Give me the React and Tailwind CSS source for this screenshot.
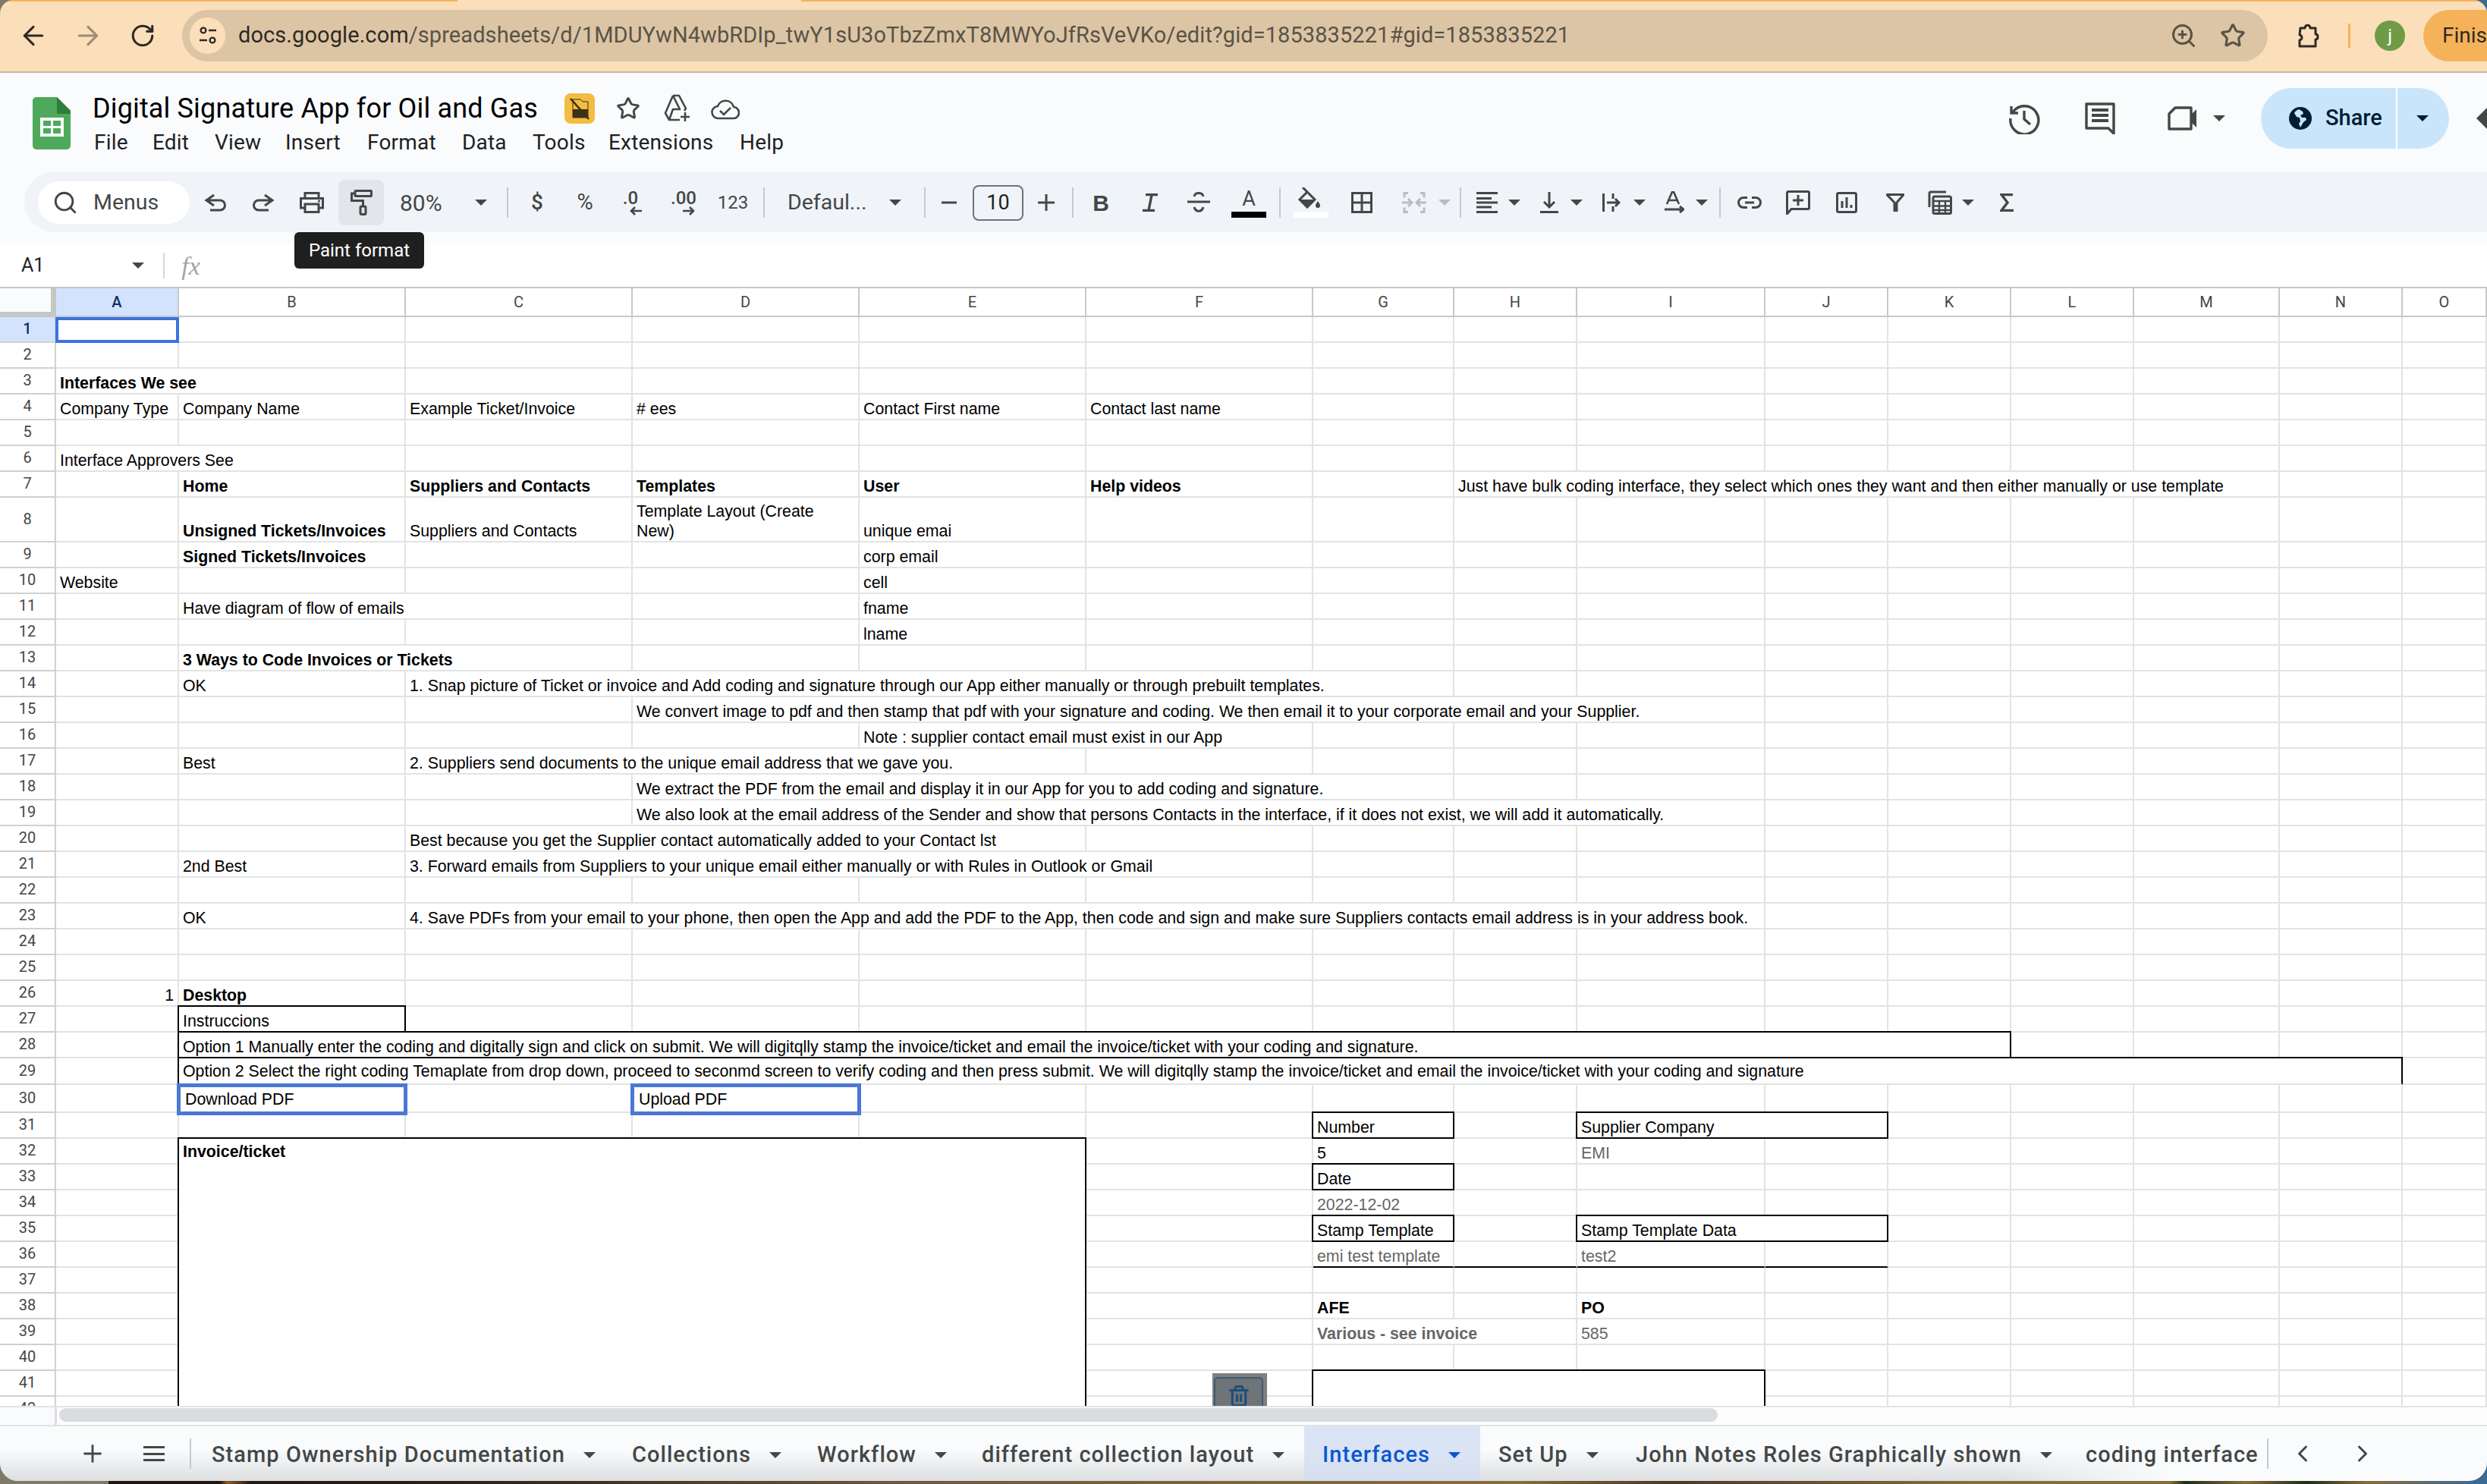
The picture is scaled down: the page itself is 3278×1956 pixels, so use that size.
import { ArrowLeft, ArrowRight, RotateCw, ZoomIn, Star, ChevronLeft, ChevronRight, Trash2, Search, Plus } from 'lucide-react'

const uiFont = "font-['Roboto',sans-serif]"
const cellFont = "font-['Liberation_Sans',Arial,sans-serif]"

const columns = ['A', 'B', 'C', 'D', 'E', 'F', 'G', 'H', 'I', 'J', 'K', 'L', 'M', 'N', 'O']
const rowCount = 42

const sheet = {
  3: [{ c: 'A', t: 'Interfaces We see', bold: true, span: 2 }],
  4: [
    { c: 'A', t: 'Company Type' },
    { c: 'B', t: 'Company Name' },
    { c: 'C', t: 'Example Ticket/Invoice' },
    { c: 'D', t: '# ees' },
    { c: 'E', t: 'Contact First name' },
    { c: 'F', t: 'Contact last name' },
  ],
  6: [{ c: 'A', t: 'Interface Approvers See', span: 2 }],
  7: [
    { c: 'B', t: 'Home', bold: true },
    { c: 'C', t: 'Suppliers and Contacts', bold: true },
    { c: 'D', t: 'Templates', bold: true },
    { c: 'E', t: 'User', bold: true },
    { c: 'F', t: 'Help videos', bold: true },
    { c: 'H', t: 'Just have bulk coding interface, they select which ones they want and then either manually or use template', span: 6 },
  ],
  8: [
    { c: 'B', t: 'Unsigned Tickets/Invoices', bold: true },
    { c: 'C', t: 'Suppliers and Contacts' },
    { c: 'D', t: 'Template Layout (Create\nNew)' },
    { c: 'E', t: 'unique emai' },
  ],
  9: [
    { c: 'B', t: 'Signed Tickets/Invoices', bold: true },
    { c: 'E', t: 'corp email' },
  ],
  10: [
    { c: 'A', t: 'Website' },
    { c: 'E', t: 'cell' },
  ],
  11: [
    { c: 'B', t: 'Have diagram of flow of emails', span: 2 },
    { c: 'E', t: 'fname' },
  ],
  12: [{ c: 'E', t: 'lname' }],
  13: [{ c: 'B', t: '3 Ways to Code Invoices or Tickets', bold: true, span: 2 }],
  14: [
    { c: 'B', t: 'OK' },
    { c: 'C', t: '1. Snap picture of Ticket or invoice and Add coding and signature through our App either manually or through prebuilt templates.', span: 5 },
  ],
  15: [{ c: 'D', t: 'We convert image to pdf and then stamp that pdf with your signature and coding. We then email it to your corporate email and your Supplier.', span: 6 }],
  16: [{ c: 'E', t: 'Note : supplier contact email must exist in our App', span: 2 }],
  17: [
    { c: 'B', t: 'Best' },
    { c: 'C', t: '2. Suppliers send documents to the unique email address that we gave you.', span: 3 },
  ],
  18: [{ c: 'D', t: 'We extract the PDF from the email and display it in our App for you to add coding and signature.', span: 4 }],
  19: [{ c: 'D', t: 'We also look at the email address of the Sender and show that persons Contacts in the interface, if it does not exist, we will add it automatically.', span: 6 }],
  20: [{ c: 'C', t: 'Best because you get the Supplier contact automatically added to your Contact lst', span: 3 }],
  21: [
    { c: 'B', t: '2nd Best' },
    { c: 'C', t: '3. Forward emails from Suppliers to your unique email either manually or with Rules in Outlook or Gmail', span: 4 },
  ],
  23: [
    { c: 'B', t: 'OK' },
    { c: 'C', t: '4. Save PDFs from your email to your phone, then open the App and add the PDF to the App, then code and sign and make sure Suppliers contacts email address is in your address book.', span: 7 },
  ],
  26: [
    { c: 'A', t: '1', right: true },
    { c: 'B', t: 'Desktop', bold: true },
  ],
  27: [{ c: 'B', t: 'Instruccions', look: 'box' }],
  28: [{ c: 'B', t: 'Option 1 Manually enter the coding and digitally sign and click on submit. We will digitqlly stamp the invoice/ticket and email the invoice/ticket with your coding and signature.', span: 10, look: 'box' }],
  29: [{ c: 'B', t: 'Option 2 Select the right coding Temaplate from drop down, proceed to seconmd screen to verify coding and then press submit. We will digitqlly stamp the invoice/ticket and email the invoice/ticket with your coding and signature', span: 13, look: 'open' }],
  30: [
    { c: 'B', t: 'Download PDF', look: 'button' },
    { c: 'D', t: 'Upload PDF', look: 'button' },
  ],
  31: [
    { c: 'G', t: 'Number', look: 'box' },
    { c: 'I', t: 'Supplier Company', span: 2, look: 'box' },
  ],
  32: [
    { c: 'B', t: 'Invoice/ticket', bold: true, span: 4, rows: 11, look: 'boxTop' },
    { c: 'G', t: '5' },
    { c: 'I', t: 'EMI', grey: true },
  ],
  33: [{ c: 'G', t: 'Date', look: 'box' }],
  34: [{ c: 'G', t: '2022-12-02', grey: true }],
  35: [
    { c: 'G', t: 'Stamp Template', look: 'box' },
    { c: 'I', t: 'Stamp Template Data', span: 2, look: 'box' },
  ],
  36: [
    { c: 'G', t: 'emi test template', grey: true, look: 'under' },
    { c: 'H', look: 'under' },
    { c: 'I', t: 'test2', grey: true, look: 'under' },
    { c: 'J', look: 'under' },
  ],
  38: [
    { c: 'G', t: 'AFE', bold: true },
    { c: 'I', t: 'PO', bold: true },
  ],
  39: [
    { c: 'G', t: 'Various - see invoice', bold: true, grey: true, span: 2 },
    { c: 'I', t: '585', grey: true },
  ],
  41: [{ c: 'G', span: 3, rows: 2, look: 'box' }],
}

const looks = {
  plain: 'border-r-2 border-b-2 border-[#e2e3e3] pl-[5px] items-end',
  under: 'border-r-2 border-b-2 border-r-[#e2e3e3] border-b-black pl-[5px] items-end',
  box: '-mt-[2px] -ml-[2px] relative z-10 border-2 border-black pl-[5px] items-end',
  boxTop: '-mt-[2px] -ml-[2px] relative z-10 border-2 border-black pl-[5px] pt-[4px] items-start',
  open: '-mt-[2px] -ml-[2px] relative z-10 border-2 border-black border-b-[#e2e3e3] pl-[5px] pb-[3px] items-end',
  button: '-mt-[2px] -ml-[3px] -mr-[2px] -mb-[3px] relative z-20 border-[5px] border-[#4a78d4] pl-[6px] items-center',
}

function buildCells() {
  const cells = []
  const taken = new Set()
  for (let r = 1; r <= rowCount; r++) {
    const filled = sheet[r] || []
    columns.forEach((letter, i) => {
      if (taken.has(`${r}-${i}`)) return
      const cell = filled.find((x) => x.c === letter) || { c: letter }
      const span = cell.span || 1
      const rows = cell.rows || 1
      for (let y = 0; y < rows; y++) {
        for (let x = 0; x < span; x++) taken.add(`${r + y}-${i + x}`)
      }
      cells.push({ ...cell, r, i, span, rows })
    })
  }
  return cells
}

function Caret({ className = 'text-[#444746]' }) {
  return (
    <svg width="16" height="8" viewBox="0 0 16 8" className={`shrink-0 ${className}`}>
      <path d="M0 0h16L8 8z" fill="currentColor" />
    </svg>
  )
}

function Slot({ className = '', children }) {
  return <div className={`flex h-full shrink-0 items-center justify-center ${className}`}>{children}</div>
}

function Divider() {
  return <div className="h-[40px] w-[2px] shrink-0 bg-[#c7c9cc]" />
}

function Icon({ w = 36, h = 36, children, className = 'text-[#444746]' }) {
  return (
    <svg width={w} height={h} viewBox={`0 0 ${w} ${h}`} fill="none" stroke="currentColor" strokeWidth="3" className={`shrink-0 ${className}`}>
      {children}
    </svg>
  )
}

function BrowserBar() {
  return (
    <div className="h-[96px] shrink-0 border-b-2 border-[#c9b499] bg-[#fbdfba]">
      <div className="flex h-[2px]">
        <div className="w-[603px] bg-[#f5b25a]" />
        <div className="w-[453px]" />
        <div className="flex-1 bg-[#f5b25a]" />
      </div>
      <div className="flex h-[92px] items-center pb-[2px]">
        <Slot className="w-[88px]">
          <ArrowLeft size={40} className="text-[#2f2a24]" strokeWidth={1.9} />
        </Slot>
        <Slot className="w-[56px]">
          <ArrowRight size={40} className="text-[#9b8c78]" strokeWidth={1.9} />
        </Slot>
        <Slot className="w-[88px]">
          <RotateCw size={34} className="text-[#2f2a24]" strokeWidth={2.2} />
        </Slot>
        <div className="ml-[8px] flex h-[68px] w-[2749px] shrink-0 items-center rounded-full bg-[#dcc5a5] pl-[10px] pr-[29px]">
          <div className="flex h-[48px] w-[47px] items-center justify-center rounded-full bg-[#fbdfba]">
            <svg width="26" height="26" viewBox="0 0 26 26" fill="none" stroke="#2f2a24" strokeWidth="2.4">
              <circle cx="7" cy="6" r="3.4" />
              <path d="M14 6h10M2 19h10" />
              <circle cx="19" cy="19" r="3.4" />
            </svg>
          </div>
          <div className={`${uiFont} ml-[17px] whitespace-nowrap text-[29px] tracking-[0.08px] text-[#5a5348]`}>
            <span className="text-[#2f2a24]">docs.google.com</span>/spreadsheets/d/1MDUYwN4wbRDIp_twY1sU3oTbzZmxT8MWYoJfRsVeVKo/edit?gid=1853835221#gid=1853835221
          </div>
          <ZoomIn size={36} className="ml-auto text-[#5a5348]" strokeWidth={2} />
          <Star size={34} className="ml-[30px] text-[#5a5348]" strokeWidth={2.2} />
        </div>
        <Slot className="w-[106px]">
          <svg width="32" height="32" viewBox="0 0 32 32" fill="none" stroke="#2f2a24" strokeWidth="3">
            <path d="M6 6h6c0-5 7-5 7 0h7v8c4 0 4 7 0 7v9H5v-8c4-1 4-6 0-7z" strokeLinejoin="round" />
          </svg>
        </Slot>
        <div className="h-[32px] w-[3px] shrink-0 bg-[#f5b25a]" />
        <div className={`${uiFont} ml-[32px] flex h-[40px] w-[40px] shrink-0 items-center justify-center rounded-full bg-[#6f9b47] text-[24px] text-white`}>j</div>
        <div className={`${uiFont} ml-[24px] flex h-[68px] w-[120px] shrink-0 items-center rounded-l-full bg-[#f5b25a] pl-[25px] text-[28px] text-[#2f2a24]`}>Finish</div>
      </div>
    </div>
  )
}

function SheetsLogo() {
  return (
    <svg width="50" height="69" viewBox="0 0 50 69" className="shrink-0">
      <path d="M5 0h27l18 18v46a5 5 0 0 1-5 5H5a5 5 0 0 1-5-5V5a5 5 0 0 1 5-5z" fill="#4ea95c" />
      <path d="M32 0l18 18v4H32z" fill="#2f7d3b" />
      <rect x="10" y="27" width="31" height="25" fill="#fff" />
      <path d="M14 31h10v7H14zM27 31h10v7H27zM14 41h10v7H14zM27 41h10v7H27z" fill="#4ea95c" />
    </svg>
  )
}

const menus = [
  ['File', 'w-[77px]'],
  ['Edit', 'w-[82px]'],
  ['View', 'w-[93px]'],
  ['Insert', 'w-[108px]'],
  ['Format', 'w-[125px]'],
  ['Data', 'w-[93px]'],
  ['Tools', 'w-[100px]'],
  ['Extensions', 'w-[173px]'],
  ['Help', 'w-[70px]'],
]

function DocHeader() {
  return (
    <div className="flex h-[130px] shrink-0 justify-between">
      <div className="flex">
        <div className="ml-[43px] mt-[32px]">
          <SheetsLogo />
        </div>
        <div className="ml-[29px] mt-[25px]">
          <div className="flex h-[44px] items-center">
            <div className={`${uiFont} w-[622px] whitespace-nowrap text-[36px] leading-[44px] tracking-[0.15px] text-black`}>Digital Signature App for Oil and Gas</div>
            <div className="flex h-[40px] w-[40px] items-center justify-center rounded-[8px] bg-[#f2bd42]">
              <svg width="28" height="32" viewBox="0 0 28 32" fill="#3d3115" stroke="#3d3115">
                <path d="M5 4h10l3 3h7v21H5z" strokeWidth="1" fill="none" />
                <path d="M5 17h20v11H5z" strokeWidth="0" />
                <path d="M2 3l24 27" strokeWidth="2.6" />
              </svg>
            </div>
            <Star size={32} className="ml-[28px] text-[#444746]" strokeWidth={2.2} />
            <svg width="36" height="38" viewBox="0 0 36 38" fill="none" stroke="#444746" strokeWidth="2.6" className="ml-[30px]">
              <path d="M13 2h8l9 17-2 3M13 2L3 25l5 9h14M13 2l9 18H13l-5 14" strokeLinejoin="round" />
              <path d="M29 24v12M23 30h12" />
            </svg>
            <svg width="38" height="34" viewBox="0 0 38 34" fill="none" stroke="#444746" strokeWidth="2.6" className="ml-[27px]">
              <path d="M10 30a8 8 0 0 1-1-16 11 11 0 0 1 21 1 7.5 7.5 0 0 1-1 15z" strokeLinejoin="round" />
              <path d="M12 20l5 5 9-9" />
            </svg>
          </div>
          <div className={`${uiFont} ml-[2px] mt-[5px] flex h-[36px] items-center text-[28px] tracking-[0.2px] text-[#1f1f1f]`}>
            {menus.map(([name, width]) => (
              <div key={name} className={width}>
                {name}
              </div>
            ))}
          </div>
        </div>
      </div>
      <div className="mt-[20px] flex h-[80px] w-[660px] shrink-0 items-center self-start">
        <Slot className="w-[100px]">
          <svg width="42" height="42" viewBox="0 0 42 42" fill="none" stroke="#444746" strokeWidth="3.4">
            <path d="M4 5v9h9" />
            <path d="M6 13A18.500 18.500 0 1 1 3 21" />
            <path d="M21 11v11l8 7" />
          </svg>
        </Slot>
        <Slot className="w-[100px]">
          <svg width="40" height="42" viewBox="0 0 40 42" fill="none" stroke="#444746" strokeWidth="3.4">
            <path d="M38 41l-7-7H2V2h36z" strokeLinejoin="round" />
            <path d="M9 10h22M9 17h22M9 24h22" strokeWidth="4" />
          </svg>
        </Slot>
        <Slot className="w-[118px] justify-start pl-[39px]">
          <svg width="40" height="32" viewBox="0 0 40 32" fill="none" stroke="#444746" strokeWidth="3.4">
            <path d="M10 2h21v28H2V10z" strokeLinejoin="round" />
            <path d="M38 4v24l-7-7v-10z" fill="#444746" stroke="none" />
          </svg>
          <div className="ml-[20px]">
            <Caret />
          </div>
        </Slot>
        <div className={`${uiFont} ml-[44px] flex h-[80px] w-[248px] shrink-0 items-center overflow-hidden rounded-full bg-[#c9e5fc] text-[#001d35]`}>
          <div className="flex h-full w-[180px] items-center border-r-2 border-white pl-[37px]">
            <svg width="30" height="30" viewBox="0 0 30 30" className="shrink-0">
              <circle cx="15" cy="15" r="15" fill="#001d35" />
              <path d="M13 3c-3 1-5 3-6 5l3 5 4 1 1 5-2 3 2 5 4-7 4-3-1-3h-5l-2-3 4-2-1-3z" fill="#c9e5fc" />
            </svg>
            <span className="ml-[18px] text-[29px] font-medium">Share</span>
          </div>
          <div className="flex flex-1 justify-center pr-[2px]">
            <Caret className="text-[#001d35]" />
          </div>
        </div>
        <div className="flex w-[50px] justify-end">
          <svg width="14" height="28" viewBox="0 0 14 28">
            <path d="M14 0L0 14l14 14z" fill="#444746" />
          </svg>
        </div>
      </div>
    </div>
  )
}

function Toolbar() {
  return (
    <div className="h-[96px] shrink-0 pl-[32px]">
      <div className={`${uiFont} flex h-[80px] items-center rounded-l-[40px] bg-[#f0f4f9] pl-[18px] pt-[2px] text-[#444746]`}>
        <div className="flex h-[56px] w-[200px] shrink-0 items-center rounded-full bg-white pl-[19px]">
          <Search size={34} strokeWidth={2} className="text-[#444746]" />
          <span className="ml-[20px] text-[28.500px]">Menus</span>
        </div>
        <Slot className="w-[68px]">
          <Icon>
            <path d="M16 8L6 15l10 7M6 15h18a6.500 6.500 0 0 1 0 13H11" />
          </Icon>
        </Slot>
        <Slot className="w-[58px]">
          <Icon>
            <path d="M20 8l10 7-10 7M30 15H12a6.500 6.500 0 0 0 0 13h13" />
          </Icon>
        </Slot>
        <Slot className="w-[70px]">
          <Icon>
            <path d="M9 12V5.500h18V12M9 25H3.500V12.500h29V25H27" />
            <rect x="9" y="20" width="18" height="10.500" />
            <circle cx="27.500" cy="16" r="1.600" fill="currentColor" stroke="none" />
          </Icon>
        </Slot>
        <Slot className="h-[60px]! w-[60px] rounded-[8px] bg-[#e2e6ea]">
          <Icon>
            <rect x="10" y="2.500" width="21.500" height="7" rx="1" />
            <path d="M10 6H5.500v9.500h15V23" />
            <rect x="17" y="23" width="7" height="10.500" rx="1.500" />
          </Icon>
        </Slot>
        <Slot className="w-[106px] justify-start pl-[21px]">
          <span className="text-[30px]">80%</span>
        </Slot>
        <Slot className="w-[44px]">
          <Caret />
        </Slot>
        <div className="w-[12px] shrink-0" />
        <Divider />
        <Slot className="w-[76px] text-[28px] font-medium">$</Slot>
        <Slot className="w-[50px] text-[29px]">%</Slot>
        <Slot className="w-[70px]">
          <div className="flex flex-col items-center">
            <span className="text-[24px] leading-[22px] font-medium">.0</span>
            <svg width="16" height="12" viewBox="0 0 16 12" fill="none" stroke="currentColor" strokeWidth="2.6" className="ml-[14px]">
              <path d="M7 1L2 6l5 5M2 6h14" />
            </svg>
          </div>
        </Slot>
        <Slot className="w-[70px]">
          <div className="flex flex-col items-center">
            <span className="text-[24px] leading-[22px] font-medium">.00</span>
            <svg width="16" height="12" viewBox="0 0 16 12" fill="none" stroke="currentColor" strokeWidth="2.6" className="ml-[14px]">
              <path d="M9 1l5 5-5 5M14 6H0" />
            </svg>
          </div>
        </Slot>
        <Slot className="w-[60px] text-[24px]">123</Slot>
        <div className="w-[10px] shrink-0" />
        <Divider />
        <Slot className="w-[152px] justify-start pl-[30px]">
          <span className="text-[28.500px]">Defaul...</span>
        </Slot>
        <Slot className="w-[40px]">
          <Caret />
        </Slot>
        <div className="w-[18px] shrink-0" />
        <Divider />
        <Slot className="w-[62px]">
          <Icon w={20} h={4}>
            <path d="M0 2h20" />
          </Icon>
        </Slot>
        <div className="flex h-[47px] w-[67px] shrink-0 items-center justify-center rounded-[8px] border-2 border-[#6f7377] text-[27px] text-[#1f1f1f]">10</div>
        <Slot className="w-[60px]">
          <Icon w={22} h={22}>
            <path d="M11 0v22M0 11h22" />
          </Icon>
        </Slot>
        <div className="w-[4px] shrink-0" />
        <Divider />
        <Slot className="w-[72px] font-['Liberation_Sans',sans-serif] text-[30px] font-bold">B</Slot>
        <Slot className="w-[58px]">
          <Icon w={20} h={24}>
            <path d="M4 1.500h16M0 22.500h16M12 2L8 22" strokeWidth="3.400" />
          </Icon>
        </Slot>
        <Slot className="w-[70px]">
          <Icon w={32} h={30}>
            <path d="M1 14h30" />
            <path d="M10 7c1-6 11-6 12 0M10 21c2 7 10 7 12 0" />
          </Icon>
        </Slot>
        <Slot className="w-[62px]">
          <div className="flex w-[46px] flex-col items-center">
            <span className="text-[27px] leading-[30px]">A</span>
            <div className="mt-[2px] h-[8px] w-[46px] bg-black" />
          </div>
        </Slot>
        <div className="w-[9px] shrink-0" />
        <Divider />
        <Slot className="w-[80px]">
          <div className="flex h-[40px] w-[46px] flex-col justify-between">
            <svg width="46" height="28" viewBox="0 0 46 28" fill="none" stroke="currentColor" strokeWidth="3">
              <path d="M12 0l6 6L8 16l10 10 10-10-10-10" />
              <path d="M9 16h19l-10 10z" fill="currentColor" stroke="none" />
              <path d="M32 18c2 3 3 4 3 6a3 3 0 0 1-6 0c0-2 1-3 3-6z" fill="currentColor" stroke="none" />
            </svg>
            <div className="h-[8px] w-[46px] bg-white" />
          </div>
        </Slot>
        <Slot className="w-[54px]">
          <Icon w={28} h={28}>
            <path d="M1.500 1.500h25v25h-25zM14 1.500v25M1.500 14h25" />
          </Icon>
        </Slot>
        <Slot className="w-[102px] justify-start pl-[26px] text-[#b7b9bc]">
          <Icon w={32} h={28} className="text-[#b9bcc0]">
            <path d="M8 1.500H3v6M3 20.500v6h5M24 1.500h5v6M29 20.500v6h-5" />
            <path d="M0 14h12M8 9l5 5-5 5M32 14H20M24 9l-5 5 5 5" />
          </Icon>
          <div className="ml-[16px]">
            <Caret className="text-[#b9bcc0]" />
          </div>
        </Slot>
        <Divider />
        <Slot className="w-[94px] justify-start pl-[20px]">
          <Icon w={28} h={28}>
            <path d="M0 1.500h28M0 8.500h20M0 14h28M0 20h20M0 26.500h28" />
          </Icon>
          <div className="ml-[14px]">
            <Caret />
          </div>
        </Slot>
        <Slot className="w-[80px] justify-start pl-[10px]">
          <Icon w={24} h={28}>
            <path d="M12 0v20M5 13l7 7 7-7M0 26.500h24" />
          </Icon>
          <div className="ml-[16px]">
            <Caret />
          </div>
        </Slot>
        <Slot className="w-[80px] justify-start pl-[12px]">
          <Icon w={24} h={26}>
            <path d="M1.500 1v24M14 1v7M14 18v7M6 13h16M17 8l5 5-5 5" />
          </Icon>
          <div className="ml-[17px]">
            <Caret />
          </div>
        </Slot>
        <Slot className="w-[86px] justify-start pl-[14px]">
          <Icon w={26} h={30}>
            <path d="M3 17L10 1h2l7 16M5.500 12h11" strokeWidth="2.600" />
            <path d="M0 24h22M20 20l5 4-5 4" />
          </Icon>
          <div className="ml-[15px]">
            <Caret />
          </div>
        </Slot>
        <Divider />
        <Slot className="w-[76px]">
          <Icon w={32} h={16}>
            <path d="M13 1.500H8a6.500 6.500 0 0 0 0 13h5M19 1.500h5a6.500 6.500 0 0 1 0 13h-5M10 8h12" />
          </Icon>
        </Slot>
        <Slot className="w-[52px]">
          <Icon w={32} h={32}>
            <path d="M1.500 31V3a1.500 1.500 0 0 1 1.500-1.500h26A1.500 1.500 0 0 1 30.500 3v20a1.500 1.500 0 0 1-1.500 1.500H7z" />
            <path d="M16 6v14M9 13h14" />
          </Icon>
        </Slot>
        <Slot className="w-[76px]">
          <Icon w={28} h={28}>
            <rect x="1.500" y="1.500" width="25" height="25" rx="2" />
            <path d="M8 12v9M14 7v14M20 17v4" />
          </Icon>
        </Slot>
        <Slot className="w-[52px]">
          <Icon w={24} h={24}>
            <path d="M1 1.500h22L14 12v12h-3V12z" strokeLinejoin="round" strokeWidth="3" fill="none" />
          </Icon>
        </Slot>
        <Slot className="w-[96px] justify-start pl-[17px]">
          <Icon w={32} h={32}>
            <path d="M2 22V4a2 2 0 0 1 2-2h20" />
            <rect x="7" y="8" width="23.500" height="22.500" rx="2" />
            <path d="M7 14h23M7 20.500h23M7 26h23M15 14v16M23 14v16" strokeWidth="2.400" />
          </Icon>
          <div className="ml-[13px]">
            <Caret />
          </div>
        </Slot>
        <Slot className="w-[50px]">
          <Icon w={18} h={24}>
            <path d="M17 1.500H2l8 10.500-8 10.500h16" strokeWidth="3.400" />
          </Icon>
        </Slot>
      </div>
    </div>
  )
}

function FormulaBar() {
  return (
    <div className="relative flex h-[56px] shrink-0 items-center bg-white">
      <span className={`${uiFont} ml-[28px] text-[25px] text-[#1f1f1f]`}>A1</span>
      <div className="ml-[116px]">
        <Caret />
      </div>
      <div className="ml-[25px] h-[34px] w-[2px] bg-[#d5d7d9]" />
      <span className="ml-[22px] font-['Liberation_Serif',serif] text-[34px] italic text-[#a3a5a8]">fx</span>
      <div className={`${uiFont} absolute left-[388px] top-[-16px] z-30 flex h-[48px] w-[171px] items-center justify-center rounded-[6px] bg-[#1f1f1f] text-[24px] text-white`}>Paint format</div>
    </div>
  )
}

function Sheet() {
  const cells = buildCells()
  return (
    <div className="relative h-[1475px] shrink-0 overflow-hidden border-t-2 border-[#c4c7c5] bg-white">
      <div className="grid grid-cols-[74px_162px_repeat(5,299px)_186px_162px_248px_162px_162px_162px_192px_162px_111px] grid-rows-[38px_repeat(7,34px)_59px_repeat(20,34px)_35px_37px_repeat(12,34px)]">
        <div className="border-r-[7px] border-b-[7px] border-[#c4c7c5] bg-[#f9fbfd]" />
        {columns.map((c) => (
          <div
            key={c}
            className={`${uiFont} flex items-center justify-center border-r-2 border-b-2 border-[#c7c9c9] text-[20px] ${c === 'A' ? 'bg-[#d3e3fd] font-medium text-[#0b2f66]' : 'text-[#444746]'}`}
          >
            {c}
          </div>
        ))}
        {Array.from({ length: rowCount }, (_, i) => i + 1).map((n) => (
          <div
            key={n}
            style={{ gridColumn: 1, gridRow: n + 1 }}
            className={`${uiFont} flex items-center justify-center border-r-2 border-b-2 border-[#cfd1d1] pb-[2px] text-[20px] ${n === 1 ? 'bg-[#d3e3fd] font-medium text-[#0b2f66]' : 'text-[#444746]'}`}
          >
            {n}
          </div>
        ))}
        {cells.map((cell) => (
          <div
            key={`${cell.r}-${cell.c}`}
            style={{
              gridColumn: `${cell.i + 2} / span ${cell.span}`,
              gridRow: `${cell.r + 1} / span ${cell.rows}`,
            }}
            className={`${cellFont} flex min-w-0 whitespace-pre text-[21.33px] leading-[26px] ${looks[cell.look || 'plain']} ${cell.bold ? 'font-bold' : ''} ${cell.grey ? 'text-[#666666]' : 'text-black'} ${cell.right ? 'justify-end pr-[5px]' : ''}`}
          >
            {cell.t}
          </div>
        ))}
        <div style={{ gridColumn: 2, gridRow: 2 }} className="relative z-20 -ml-[1px] border-4 border-[#3b73de]" />
      </div>
      {/* trash button floating over the sheet */}
      <div className="absolute left-[1598px] top-[1430px] z-20 h-[60px] w-[72px] bg-[#7f7f7f] pl-[2px] pt-[5px]">
        <div className="flex h-[60px] w-[65px] justify-center rounded-[5px] border-2 border-[#3d5a75] bg-[#6f7478] pt-[8px]">
          <Trash2 size={30} className="text-[#1d4e79]" strokeWidth={2.4} />
        </div>
      </div>
    </div>
  )
}

function ScrollRow() {
  return (
    <div className="flex h-[27px] shrink-0 border-t-2 border-b-2 border-t-[#e2e3e3] border-b-[#e1e3e1] bg-[#fdfdfe]">
      <div className="h-full w-[75px] border-r-[3px] border-[#dadce0] bg-[#f9fbfd]" />
      <div className="ml-[3px] mt-[1px] h-[18px] w-[2186px] rounded-[9px] bg-[#dadce0]" />
    </div>
  )
}

const tabs = [
  { name: 'Stamp Ownership Documentation', width: 'w-[554px]' },
  { name: 'Collections', width: 'w-[244px]' },
  { name: 'Workflow', width: 'w-[217px]' },
  { name: 'different collection layout', width: 'w-[449px]' },
  { name: 'Interfaces', width: 'w-[232px]', active: true },
  { name: 'Set Up', width: 'w-[181px]' },
  { name: 'John Notes Roles Graphically shown', width: 'w-[593px]' },
]

function TabBar() {
  return (
    <div className={`${uiFont} relative flex h-[72px] shrink-0 items-center overflow-hidden bg-[#f9fbfd] text-[#444746]`}>
      <div className="absolute bottom-0 left-0 h-[40px] w-[2860px] bg-gradient-to-b from-transparent to-[#dcdee0] [mask-image:linear-gradient(to_right,black_92%,transparent)]" />
      <Slot className="relative w-[217px] justify-start pl-[104px]">
        <Plus size={36} strokeWidth={1.9} />
        <div className="ml-[49px] flex h-[20px] w-[28px] shrink-0 flex-col justify-between">
          <div className="h-[3px] bg-[#444746]" />
          <div className="h-[3px] bg-[#444746]" />
          <div className="h-[3px] bg-[#444746]" />
        </div>
      </Slot>
      <div className="relative ml-[33px] h-[40px] w-[2px] shrink-0 bg-[#c7c9cc]" />
      <div className="relative w-[3px] shrink-0" />
      {tabs.map((tab) => (
        <div
          key={tab.name}
          className={`relative flex h-full shrink-0 items-center pl-[24px] pt-[4px] text-[29px] font-medium tracking-[1.050px] ${tab.width} ${tab.active ? 'bg-[#d3def3]/80 text-[#0b57d0]' : ''}`}
        >
          <span className="whitespace-nowrap">{tab.name}</span>
          <div className="ml-[24px]">
            <Caret className={tab.active ? 'text-[#0b57d0]' : 'text-[#444746]'} />
          </div>
        </div>
      ))}
      <div className="relative h-full w-[263px] shrink-0 content-center overflow-hidden whitespace-nowrap pl-[24px] pt-[4px] text-[29px] font-medium tracking-[1.050px]">coding interface</div>
      <div className="relative h-[40px] w-[2px] shrink-0 bg-[#c7c9cc]" />
      <ChevronLeft size={36} strokeWidth={2} className="relative ml-[27px]" />
      <ChevronRight size={36} strokeWidth={2} className="relative ml-[43px]" />
    </div>
  )
}

export default function App() {
  return (
    <div className="h-[1956px] w-[3278px] overflow-hidden bg-[linear-gradient(to_right,#7f7a68_0,#7f7a68_143px,#201612_143px,#201612_290px,#8a5a28_300px,#241a14_330px,#2a2018_600px,#6f5a3c_1200px,#8a6b3c_2000px,#4a3a24_2200px,#8a6b3c_2600px,#8a6b3c_2860px,#1f2e18_2880px,#8a6b3c_2960px,#1f2e18_3040px,#8a6b3c_3120px,#3c6a90_3260px)]">
      <div className="flex h-[1952px] flex-col overflow-hidden rounded-b-[24px] rounded-t-[18px]">
        <BrowserBar />
        <div className="shrink-0 bg-[#f9fbfd]">
          <DocHeader />
          <Toolbar />
        </div>
        <FormulaBar />
        <Sheet />
        <ScrollRow />
        <TabBar />
      </div>
    </div>
  )
}
